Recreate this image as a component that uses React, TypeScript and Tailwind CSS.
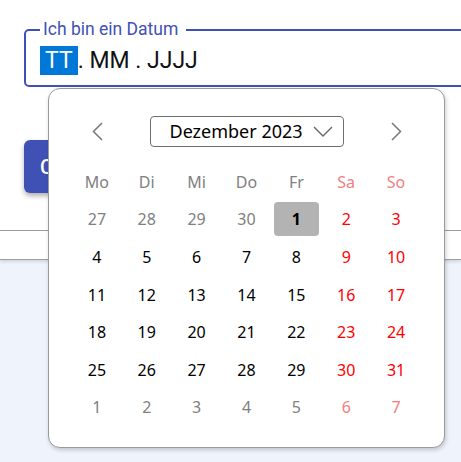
import React from 'react';

interface Day {
  n: number;
  outside: boolean;
  weekend: boolean;
  selected?: boolean;
}

const weekdays = ['Mo', 'Di', 'Mi', 'Do', 'Fr', 'Sa', 'So'];

function buildDays(): Day[] {
  const days: Day[] = [];
  const lead = [27, 28, 29, 30];
  lead.forEach((n, i) => days.push({ n, outside: true, weekend: i >= 5 }));
  for (let n = 1; n <= 31; n++) {
    const col = days.length % 7;
    days.push({ n, outside: false, weekend: col >= 5, selected: n === 1 });
  }
  let n = 1;
  while (days.length < 42) {
    const col = days.length % 7;
    days.push({ n: n++, outside: true, weekend: col >= 5 });
  }
  return days;
}

function dayColor(d: Day): string {
  if (d.outside) return d.weekend ? 'text-[#f08080]' : 'text-[#808080]';
  return d.weekend ? 'text-[#ff0000]' : 'text-black';
}

function ChevronLeft() {
  return (
    <svg width="11" height="19" viewBox="0 0 11 19" fill="none">
      <path d="M10 1 L1.5 9.5 L10 18" stroke="#777" strokeWidth="1.5" />
    </svg>
  );
}

function ChevronRight() {
  return (
    <svg width="11" height="19" viewBox="0 0 11 19" fill="none">
      <path d="M1 1 L9.5 9.5 L1 18" stroke="#777" strokeWidth="1.5" />
    </svg>
  );
}

function ChevronDown() {
  return (
    <svg width="20" height="11" viewBox="0 0 20 11" fill="none">
      <path d="M1 1 L10 10 L19 1" stroke="#666" strokeWidth="1.4" />
    </svg>
  );
}

export default function App() {
  const days = buildDays();

  return (
    <div className="relative h-[462px] overflow-hidden bg-[#eff4fc] font-['Roboto',sans-serif]">
      {/* ── Form card ── */}
      <div className="h-[231px] bg-white border-b border-[#9e9e9e] shadow-[0_2px_3px_rgba(0,0,0,0.12)] pl-6 pt-[29px]">
        <div className="relative w-[480px] h-[58px] rounded-[5px] border-[2.5px] border-[#3f51b5]">
          <span className="absolute -top-[13px] left-[14px] pl-[3px] pr-[8px] bg-white text-[17.5px] leading-[22px] text-[#3f51b5]">
            Ich bin ein Datum
          </span>
          <div className="flex items-center pl-[14px] pt-[15px] text-[23px] leading-[29px] text-[#111]">
            <span className="px-[5px] bg-[#0078d7] text-white">TT</span>
            <span className="whitespace-pre">. MM . JJJJ</span>
          </div>
        </div>

        <button
          type="button"
          className="mt-[53px] h-[53px] px-4 rounded-[6px] bg-[#3f51b5] text-white text-[20px] font-medium shadow-[0_3px_5px_rgba(0,0,0,0.3)]"
        >
          Clear
        </button>
      </div>

      <div className="h-[29px] bg-white border-b border-[#9e9e9e] shadow-[0_2px_3px_rgba(0,0,0,0.12)]" />

      {/* ── Calendar popup ── */}
      <div className="absolute top-[88px] left-[48px] w-[397px] h-[360px] rounded-[12px] border border-[#9a9a9a] bg-white shadow-[1px_2px_4px_rgba(0,0,0,0.2)] px-[23px] pt-[27px] font-['Noto_Sans',sans-serif]">
        <div className="flex items-center justify-between h-[31px]">
          <button type="button" className="w-[50px] flex justify-center">
            <ChevronLeft />
          </button>
          <div className="flex items-center gap-[10px] h-[31px] w-[194px] pl-[19px] rounded-[4px] border border-[#6e6e6e] text-[18px] text-black">
            <span>Dezember 2023</span>
            <ChevronDown />
          </div>
          <button type="button" className="w-[50px] flex justify-center">
            <ChevronRight />
          </button>
        </div>

        <div className="mt-[16px] grid grid-cols-7 auto-rows-[37.6px] text-[16px]">
          {weekdays.map((w, i) => (
            <div
              key={w}
              className={`flex items-center justify-center ${i >= 5 ? 'text-[#f08080]' : 'text-[#808080]'}`}
            >
              {w}
            </div>
          ))}
          {days.map((d, i) => (
            <div key={i} className="flex items-center justify-center">
              <span
                className={`flex items-center justify-center w-[45px] h-[34px] rounded-[4px] ${dayColor(d)} ${
                  d.selected ? 'bg-[#b3b3b3] font-bold' : ''
                }`}
              >
                {d.n}
              </span>
            </div>
          ))}
        </div>
      </div>
    </div>
  );
}
